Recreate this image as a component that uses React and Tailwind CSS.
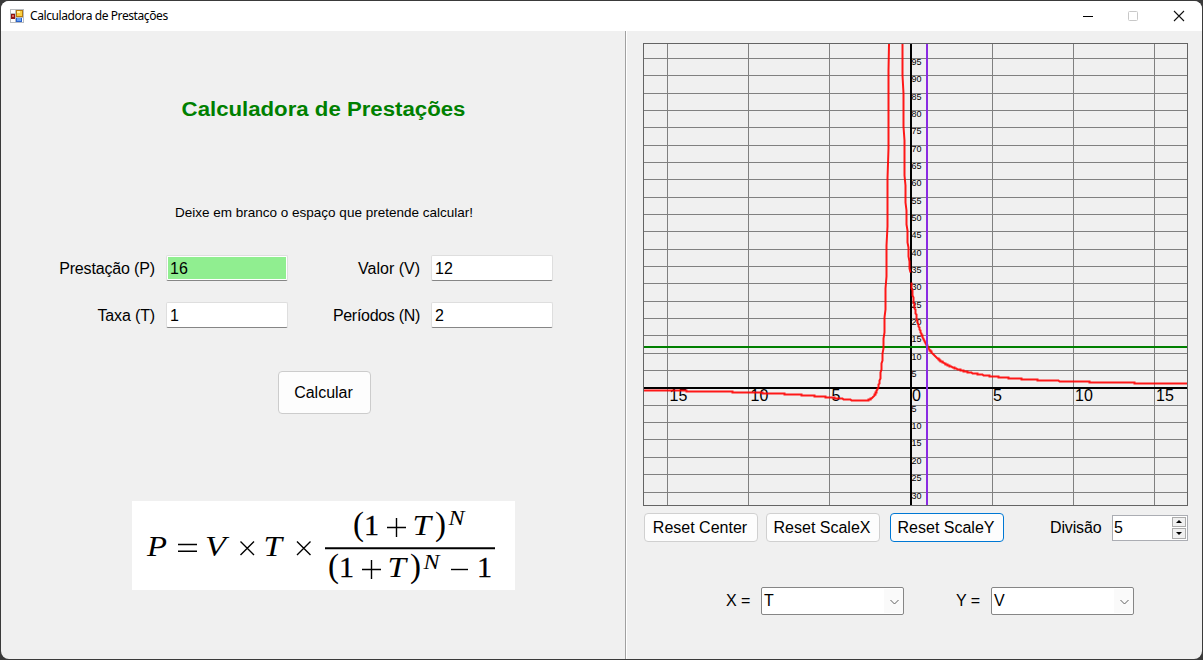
import React from "react";

const ORIGIN_X = 911;
const ORIGIN_Y = 388;
const UNIT_X = 16.22;
const UNIT_Y = 3.468;

const GRID_X = [667, 748, 829, 992, 1073, 1154];
const X_LABELS = [
  [669.5, "15"],
  [750.5, "10"],
  [831.5, "5"],
  [912, "0"],
  [993, "5"],
  [1075, "10"],
  [1156, "15"],
];
const GRID_ABOVE = [370, 353, 335, 318, 301, 283, 266, 249, 231, 214, 197, 179, 162, 145, 127, 110, 93, 75, 58];
const GRID_BELOW = [405, 422, 439, 457, 474, 492];

function curve(from, to) {
  const points = [];
  let last = "";
  for (let t = from; t <= to; t += 0.02) {
    const v = (16 * (t + 2)) / ((1 + t) * (1 + t));
    if (!Number.isFinite(v) || v > 130) continue;
    const px = Math.floor(ORIGIN_X + t * UNIT_X - 0.5) + 0.5;
    const py = Math.floor(ORIGIN_Y - 1 - v * UNIT_Y) + 0.5;
    const p = `${px},${py}`;
    if (p !== last) points.push(p);
    last = p;
  }
  return points.join(" ");
}

const CURVES = [curve(-16.6, -1.1), curve(-0.9, -0.018), curve(0.04, 17.2)];

function Chart() {
  return (
    <svg
      viewBox="643 43 545 463"
      className="block h-[463px] w-[545px] shrink-0 overflow-hidden font-['Liberation_Sans',sans-serif]"
    >
      <g stroke="#808080" strokeWidth="1">
        {GRID_X.map((x) => (
          <line key={x} x1={x + 0.5} x2={x + 0.5} y1="43" y2="506" />
        ))}
        {[...GRID_ABOVE, ...GRID_BELOW].map((y) => (
          <line key={y} x1="643" x2="1188" y1={y + 0.5} y2={y + 0.5} />
        ))}
      </g>
      <g stroke="#000" strokeWidth="2">
        <line x1="643" x2="1188" y1={ORIGIN_Y} y2={ORIGIN_Y} />
        <line x1={ORIGIN_X} x2={ORIGIN_X} y1="43" y2="506" />
      </g>
      <g fontSize="9" fill="#000">
        {GRID_ABOVE.map((y, i) => (
          <text key={y} x="911.4" y={y + 7.3}>{(i + 1) * 5}</text>
        ))}
        {GRID_BELOW.map((y, i) => (
          <text key={y} x="911.4" y={y + 7.3}>{(i + 1) * 5}</text>
        ))}
      </g>
      <g fontSize="16" fill="#000">
        {X_LABELS.map(([x, label]) => (
          <text key={x} x={x} y="401">{label}</text>
        ))}
      </g>
      <line x1="643" x2="1188" y1="347" y2="347" stroke="#008000" strokeWidth="2" />
      <g fill="none" stroke="#ff0000" strokeOpacity="0.9" strokeWidth="2">
        {CURVES.map((points, i) => (
          <polyline key={i} points={points} />
        ))}
      </g>
      <line x1="927" x2="927" y1="43" y2="506" stroke="#8a2be2" strokeWidth="2" />
      <rect x="643.5" y="43.5" width="544" height="462" fill="none" stroke="#646464" />
    </svg>
  );
}

function AppIcon() {
  return (
    <svg viewBox="0 0 14 14" className="h-3.5 w-3.5" shapeRendering="crispEdges">
      <rect width="14" height="14" fill="#b9bcc0" />
      <rect x="1" y="1" width="4" height="3" fill="#fff" />
      <rect x="1" y="10" width="4" height="3" fill="#fff" />
      <rect x="12" y="9" width="1" height="4" fill="#fff" />
      <rect x="1" y="5" width="4" height="5" fill="#8e1414" />
      <rect x="2" y="6" width="2" height="2" fill="#e0685c" />
      <rect x="6" y="1" width="7" height="7" fill="#b67a10" />
      <rect x="7" y="2" width="5" height="5" fill="#fcd040" />
      <rect x="7" y="2" width="3" height="2" fill="#fff0a0" />
      <rect x="6" y="9" width="6" height="4" fill="#2c62c8" />
      <rect x="7" y="9" width="4" height="3" fill="#6aa2f4" />
    </svg>
  );
}

function TitleBar() {
  return (
    <header className="flex h-[30px] shrink-0 items-center bg-white pl-[9px]">
      <AppIcon />
      <span className="ml-[6px] text-[12px] leading-[30px] tracking-[-0.41px] whitespace-nowrap text-black font-['Noto_Sans',sans-serif]">
        Calculadora de Prestações
      </span>
      <div className="ml-auto flex items-center pr-[17px]">
        <svg viewBox="0 0 12 12" className="mr-[33px] h-3 w-3">
          <path d="M1 6.5H11" stroke="#000" />
        </svg>
        <svg viewBox="0 0 12 12" className="mr-[34px] h-3 w-3">
          <rect x="1.5" y="1.5" width="9" height="9" rx="1" fill="none" stroke="#c8c8c8" />
        </svg>
        <svg viewBox="0 0 12 12" className="h-3 w-3">
          <path d="M1 1L11 11M11 1L1 11" stroke="#111" strokeWidth="1.1" />
        </svg>
      </div>
    </header>
  );
}

function Field({ label, value, labelClass, highlight }) {
  return (
    <label className="flex h-[26px] items-center">
      <span className={`pt-[2px] text-right leading-[26px] whitespace-nowrap ${labelClass}`}>{label}</span>
      <span className="ml-[11px] flex h-[26px] w-[122px] rounded-[2px] border border-[#dedede] border-b-[#868686] bg-white p-px">
        <span className={`flex-1 pl-[2px] leading-[23px] ${highlight ? "bg-[#90ee90]" : "bg-white"}`}>{value}</span>
      </span>
    </label>
  );
}

function Button({ children, className }) {
  return (
    <button className={`rounded-[4px] border bg-[#fdfdfd] pr-[2px] whitespace-nowrap text-black ${className}`}>
      {children}
    </button>
  );
}

function Formula() {
  const glyph = { lengthAdjust: "spacingAndGlyphs" };
  return (
    <svg
      viewBox="0 0 383 89"
      className="h-[89px] w-[383px] bg-white font-['Liberation_Serif',serif]"
      fill="#000"
    >
      <g fontStyle="italic" fontSize="30">
        <text x="15" y="55" textLength="20" {...glyph}>P</text>
        <text x="73" y="55" textLength="21" {...glyph}>V</text>
        <text x="131.500" y="55" textLength="18.5" {...glyph}>T</text>
        <text x="280.500" y="34" textLength="18.5" {...glyph}>T</text>
        <text x="255.500" y="76" textLength="18.5" {...glyph}>T</text>
      </g>
      <g fontStyle="italic" fontSize="21">
        <text x="316.5" y="23.5" textLength="16" {...glyph}>N</text>
        <text x="291.5" y="67.5" textLength="16" {...glyph}>N</text>
      </g>
      <g fontSize="30" stroke="#000" strokeWidth="0.3">
        <text x="232" y="34">1</text>
        <text x="207" y="76">1</text>
        <text x="345" y="76">1</text>
      </g>
      <g fontSize="33">
        <text x="221" y="34">(</text>
        <text x="303" y="34">)</text>
        <text x="196" y="76">(</text>
        <text x="278" y="76">)</text>
      </g>
      <g stroke="#000" strokeWidth="1.4" fill="none">
        <path d="M46 43.500H65M46 50.200H65" />
        <path d="M108.500 40.500L122 54M122 40.500L108.500 54" />
        <path d="M165 40.500L178.500 54M178.500 40.500L165 54" />
        <path d="M255 26.500H274M264.500 17V36" />
        <path d="M230 68.500H249M239.500 59V78" />
        <path d="M319 68.500H336" />
        <path d="M193 47.300H363" strokeWidth="1.9" />
      </g>
    </svg>
  );
}

function FormPanel() {
  return (
    <section className="flex w-[625px] shrink-0 flex-col border-r border-[#a0a0a0]">
      <h1 className="mt-[66px] h-6 w-[645px] origin-center scale-x-[1.11] text-center text-[20px] leading-6 font-bold whitespace-nowrap text-[#008000]">
        Calculadora de Prestações
      </h1>
      <p className="mt-[82px] h-5 w-[646px] text-center text-[13.5px] leading-5 whitespace-nowrap">
        Deixe em branco o espaço que pretende calcular!
      </p>
      <div className="mt-[32px] flex flex-col gap-[21px] pl-[45px]">
        <div className="flex">
          <Field label="Prestação (P)" value="16" labelClass="w-[109px] tracking-[-0.15px]" highlight />
          <Field label="Valor (V)" value="12" labelClass="w-[132px]" />
        </div>
        <div className="flex">
          <Field label="Taxa (T)" value="1" labelClass="w-[109px] tracking-[-0.15px]" />
          <Field label="Períodos (N)" value="2" labelClass="w-[132px] tracking-[-0.3px]" />
        </div>
      </div>
      <Button className="mt-[43px] ml-[277px] h-[43px] w-[93px] border-[#cccccc]">Calcular</Button>
      <div className="mt-[87px] ml-[131px]">
        <Formula />
      </div>
    </section>
  );
}

function Spinner({ value }) {
  return (
    <div className="flex h-[26px] w-[76px] border border-[#abadb3] bg-white p-px">
      <span className="flex-1 leading-[22px]">{value}</span>
      <div className="flex w-[14px] flex-col gap-px">
        <span className="flex flex-1 items-center justify-center border border-[#acacac] bg-[#f0f0f0]">
          <svg viewBox="0 0 6 3" className="h-[3px] w-[6px]"><path d="M0 3L3 0L6 3Z" /></svg>
        </span>
        <span className="flex flex-1 items-center justify-center border border-[#acacac] bg-[#f0f0f0]">
          <svg viewBox="0 0 6 3" className="h-[3px] w-[6px]"><path d="M0 0L3 3L6 0Z" /></svg>
        </span>
      </div>
    </div>
  );
}

function Combo({ label, value }) {
  return (
    <div className="flex h-7 items-center">
      <span className="w-[25px] pl-px leading-7 whitespace-nowrap">{label}</span>
      <div className="ml-[11px] flex h-7 w-[143px] rounded-[2px] border border-[#868686] bg-white">
        <span className="flex-1 pl-[2px] leading-[26px]">{value}</span>
        <span className="my-px flex w-[19px] items-center justify-center bg-[#fafafa] pl-px">
          <svg viewBox="0 0 9 6" className="mt-px h-1.5 w-[9px]">
            <path d="M0.500 1L4.500 5L8.500 1" fill="none" stroke="#606060" />
          </svg>
        </span>
      </div>
    </div>
  );
}

function GraphPanel() {
  return (
    <section className="flex flex-1 flex-col border-l border-white pt-3 pl-4">
      <Chart />
      <div className="mt-[7px] flex h-[29px] items-center pl-px">
        <Button className="h-[29px] w-[114px] border-[#d0d0d0]">Reset Center</Button>
        <Button className="ml-2 h-[29px] w-[114px] border-[#d0d0d0]">Reset ScaleX</Button>
        <Button className="ml-[10px] h-[29px] w-[114px] border-[#0078d4]">Reset ScaleY</Button>
        <span className="ml-[45px] w-[52px] pl-px tracking-[-0.15px]">Divisão</span>
        <div className="ml-[11px]">
          <Spinner value="5" />
        </div>
      </div>
      <div className="mt-[45px] flex gap-[51px] pl-[82px]">
        <Combo label="X =" value="T" />
        <Combo label="Y =" value="V" />
      </div>
    </section>
  );
}

export default function App() {
  return (
    <div className="h-[660px] w-[1203px] bg-[#3a3a3a] p-px font-['Liberation_Sans',Arial,sans-serif] text-[16px] text-black">
      <div className="flex h-[658px] w-[1201px] flex-col overflow-hidden rounded-[8px] bg-[#f0f0f0]">
        <TitleBar />
        <main className="flex flex-1">
          <FormPanel />
          <GraphPanel />
        </main>
      </div>
    </div>
  );
}
